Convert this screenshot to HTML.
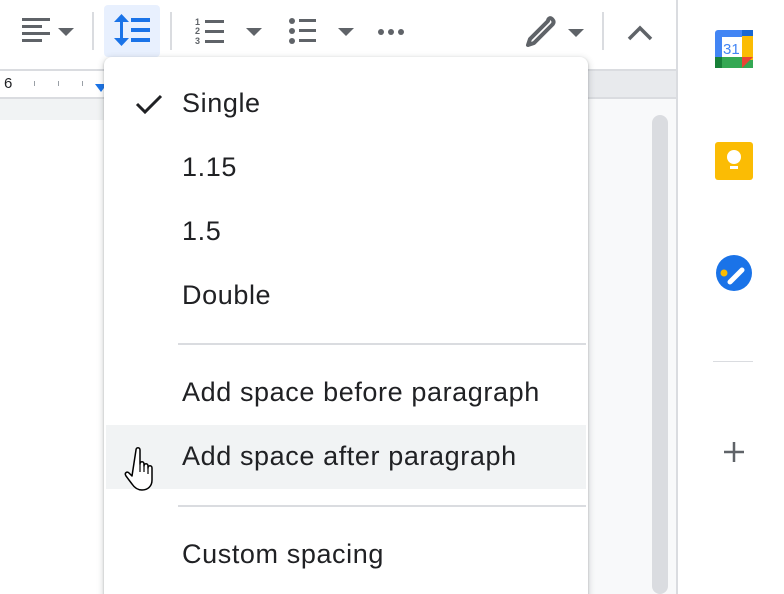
<!DOCTYPE html>
<html style="width:784px;height:594px;overflow:hidden"><head><style>
body{margin:0;width:784px;height:594px;overflow:hidden;background:#fff;font-family:"Liberation Sans",Arial,sans-serif;position:relative}
.a{position:absolute}
.item{position:absolute;left:182px;font-size:27px;color:#202124;letter-spacing:0.6px}
</style></head><body>
<div class="a" style="left:0;top:0;width:677px;height:70px;background:#fff"></div>
<svg class="a" style="left:0;top:0" width="677" height="70">
 <g fill="#5f6368">
  <rect x="22" y="18" width="28" height="3"/><rect x="22" y="25" width="20" height="3"/><rect x="22" y="32" width="28" height="3"/><rect x="22" y="39" width="20" height="3"/>
  <path d="M58 28h16l-8 8z"/>
  <rect x="92" y="12" width="2" height="38" fill="#dadce0"/>
  <rect x="170" y="12" width="2" height="38" fill="#dadce0"/>
 </g>
 <rect x="104" y="5" width="56" height="52" rx="4" fill="#e8f0fe"/>
 <g fill="#1a73e8">
  <rect x="120" y="16" width="3" height="28"/><path d="M114 22l7.5-8 7.5 8z"/><path d="M114 38l7.5 8 7.5-8z"/>
  <rect x="131" y="18" width="19" height="4"/><rect x="131" y="28" width="19" height="4"/><rect x="131" y="38" width="19" height="4"/>
 </g>
 <g fill="#5f6368">
  <text x="195" y="25" font-size="9" font-weight="bold" font-family="Liberation Sans">1</text>
  <text x="195" y="34" font-size="9" font-weight="bold" font-family="Liberation Sans">2</text>
  <text x="195" y="44" font-size="9" font-weight="bold" font-family="Liberation Sans">3</text>
  <rect x="205" y="20" width="19" height="3"/><rect x="205" y="30" width="19" height="3"/><rect x="205" y="40" width="19" height="3"/>
  <path d="M246 28h16l-8 8z"/>
  <circle cx="292" cy="21" r="3"/><circle cx="292" cy="31" r="3"/><circle cx="292" cy="41" r="3"/>
  <rect x="299" y="19" width="17" height="3"/><rect x="299" y="29" width="17" height="3"/><rect x="299" y="39" width="17" height="3"/>
  <path d="M338 28h16l-8 8z"/>
  <circle cx="381" cy="32" r="3"/><circle cx="391" cy="32" r="3"/><circle cx="401" cy="32" r="3"/>
  <path d="M548 21l-18 18-2 6 6-2 18-18c2-2 2-4 0-6c-2-2-4-0-4 2z" fill="none" stroke="#5f6368" stroke-width="4" stroke-linejoin="round"/>
  <path d="M568 29h16l-8 8z"/>
  <rect x="602" y="12" width="2" height="38" fill="#dadce0"/>
  <path d="M629 39l11-11 11 11" fill="none" stroke="#5f6368" stroke-width="3.5"/>
 </g>
</svg>
<div class="a" style="left:0;top:69px;width:677px;height:2px;background:#dadce0"></div>
<div class="a" style="left:0;top:71px;width:677px;height:26px;background:#e8eaed"></div>
<div class="a" style="left:0;top:71px;width:110px;height:26px;background:#fff"></div>
<div class="a" style="left:4px;top:75px;font-size:15px;color:#202124">6</div>
<div class="a" style="left:34px;top:81px;width:1px;height:5px;background:#9aa0a6"></div>
<div class="a" style="left:58px;top:81px;width:1px;height:5px;background:#9aa0a6"></div>
<div class="a" style="left:82px;top:81px;width:1px;height:5px;background:#9aa0a6"></div>
<div class="a" style="left:95px;top:84px;width:0;height:0;border-left:6px solid transparent;border-right:6px solid transparent;border-top:8px solid #1a73e8"></div>
<div class="a" style="left:0;top:97px;width:677px;height:2px;background:#dadce0"></div>
<div class="a" style="left:0;top:99px;width:677px;height:21px;background:#f1f3f4"></div>
<div class="a" style="left:0;top:120px;width:110px;height:474px;background:#fff"></div>
<div class="a" style="left:588px;top:99px;width:89px;height:495px;background:#f8f9fa"></div>
<div class="a" style="left:652px;top:115px;width:16px;height:479px;background:#dadce0;border-radius:8px"></div>
<div class="a" style="left:676px;top:0;width:2px;height:594px;background:#dadce0"></div>
<svg class="a" style="left:700px;top:0" width="84" height="594">
 <rect x="15" y="30" width="38" height="38" rx="3" fill="#4285f4"/>
 <rect x="15" y="57" width="38" height="11" fill="#34a853"/>
 <rect x="15" y="57" width="7" height="11" fill="#188038"/>
 <rect x="42" y="30" width="11" height="30" fill="#fbbc04"/>
 <rect x="42" y="30" width="11" height="6" fill="#1967d2"/>
 <path d="M42 57h11l-11 11z" fill="#ea4335"/>
 <rect x="22" y="37" width="20" height="20" fill="#fff"/>
 <text x="23" y="54" font-size="15" fill="#4285f4" font-family="Liberation Sans">31</text>
 <rect x="15" y="142" width="38" height="38" rx="3" fill="#fbbc04"/>
 <circle cx="34" cy="157" r="7" fill="#fff"/><rect x="30" y="166" width="8" height="3" fill="#fff"/>
 <circle cx="34" cy="273" r="18" fill="#1a73e8"/>
 <circle cx="24" cy="273" r="3.5" fill="#fbbc04"/>
 <path d="M30 282l12-12" stroke="#fff" stroke-width="5" stroke-linecap="round"/>
 <rect x="13" y="361" width="40" height="1" fill="#dadce0"/>
 <path d="M34 442v20M24 452h20" stroke="#5f6368" stroke-width="2.5"/>
</svg>
<div class="a" style="left:104px;top:57px;width:484px;height:560px;background:#fff;border-radius:8px;box-shadow:0 2px 6px 2px rgba(60,64,67,.15),0 1px 2px rgba(60,64,67,.3)"></div>
<svg class="a" style="left:134px;top:92px" width="30" height="26"><path d="M3 12l8 8 16-16" fill="none" stroke="#202124" stroke-width="3"/></svg>
<div class="item" style="top:88px">Single</div>
<div class="item" style="top:152px">1.15</div>
<div class="item" style="top:216px">1.5</div>
<div class="item" style="top:280px">Double</div>
<div class="a" style="left:178px;top:343px;width:408px;height:2px;background:#dadce0"></div>
<div class="item" style="top:377px">Add space before paragraph</div>
<div class="a" style="left:106px;top:425px;width:480px;height:64px;background:#f1f3f4"></div>
<div class="item" style="top:441px">Add space after paragraph</div>
<div class="a" style="left:178px;top:505px;width:408px;height:2px;background:#dadce0"></div>
<div class="item" style="top:539px">Custom spacing</div>
<svg class="a" style="left:124px;top:446px" width="36" height="50"><path d="M12 4c0-3 4-3 4 0v14c0-3 4-3 4 0v2c0-3 4-3 4 0v2c0-3 4-3 4 0v12c0 6-4 10-10 10c-5 0-8-3-10-6l-6-8c-2-3 1-5 3-3l3 3z" fill="#fff" stroke="#000" stroke-width="1.5" stroke-linejoin="round"/><path d="M16 18v8M20 20v6M24 22v6" stroke="#000" stroke-width="1.2"/></svg>
</body></html>
